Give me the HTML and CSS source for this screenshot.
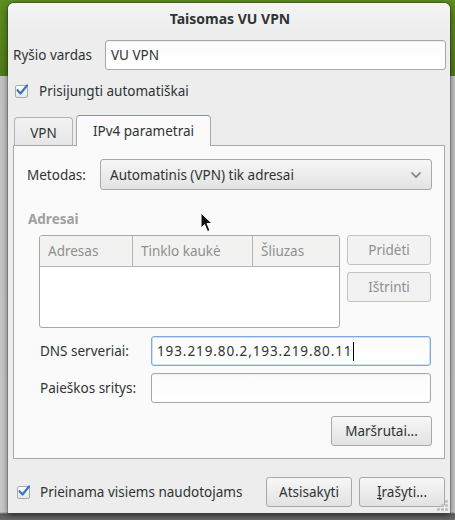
FILE: index.html
```html
<!DOCTYPE html>
<html lang="lt">
<head>
<meta charset="utf-8">
<link rel="stylesheet" href="styles.css">
</head>
<body>
<div class="desktop">
  <div class="window">
    <div class="titlebar">Taisomas VU VPN</div>
    <div class="content">
      <div class="row name-row">
        <span class="label name-label">Ryšio vardas</span>
        <div class="entry name-entry">VU VPN</div>
      </div>
      <div class="check-row auto-row">
        <span class="checkbox"><svg viewBox="0 0 14 14" width="14" height="14"><path d="M2.5 7.2 L5.5 10.5 L12 2.5" fill="none" stroke="#3a74c4" stroke-width="2.2" stroke-linecap="round" stroke-linejoin="round"/></svg></span>
        <span class="check-text">Prisijungti automatiškai</span>
      </div>
      <div class="tabs">
        <div class="tab">VPN</div>
        <div class="tab active">IPv4 parametrai</div>
      </div>
      <div class="notebook">
        <div class="row method-row">
          <span class="label method-label">Metodas:</span>
          <div class="combo">
            <span>Automatinis (VPN) tik adresai</span>
            <svg class="chev" viewBox="0 0 12 8" width="12" height="8"><path d="M1.5 1.5 L6 6 L10.5 1.5" fill="none" stroke="#7b7b7b" stroke-width="1.6"/></svg>
          </div>
        </div>
        <div class="section-title">Adresai</div>
        <div class="addr-row">
          <div class="table">
            <div class="thead">
              <div class="th c1">Adresas</div>
              <div class="th c2">Tinklo kaukė</div>
              <div class="th c3">Šliuzas</div>
            </div>
            <div class="tbody"></div>
          </div>
          <div class="side-buttons">
            <div class="btn disabled side">Pridėti</div>
            <div class="btn disabled side">Ištrinti</div>
          </div>
        </div>
        <div class="row field-row dns-row">
          <span class="label field-label">DNS serveriai:</span>
          <div class="entry field-entry focus"><span class="dns-text">193.219.80.2,193.219.80.11</span><span class="caret"></span></div>
        </div>
        <div class="row field-row search-row">
          <span class="label field-label">Paieškos sritys:</span>
          <div class="entry field-entry"></div>
        </div>
        <div class="routes-row">
          <div class="btn routes">Maršrutai...</div>
        </div>
      </div>
      <div class="bottom-row">
        <div class="check-row">
          <span class="checkbox"><svg viewBox="0 0 14 14" width="14" height="14"><path d="M2.5 7.2 L5.5 10.5 L12 2.5" fill="none" stroke="#3a74c4" stroke-width="2.2" stroke-linecap="round" stroke-linejoin="round"/></svg></span>
          <span class="check-text">Prieinama visiems naudotojams</span>
        </div>
        <div class="dialog-buttons">
          <div class="btn action">Atsisakyti</div>
          <div class="btn action"><u>Į</u>rašyti...</div>
        </div>
      </div>
    </div>
    <div class="grip">
      <i></i><i></i><i></i><i></i><i></i><i></i>
    </div>
  </div>
  <svg class="cursor" viewBox="0 0 14 22" width="14" height="22"><path d="M1 1 L1 16 L4.5 12.5 L7.5 19.5 L10 18.5 L7 11.5 L12 11.5 Z" fill="#111" stroke="#fff" stroke-width="1"/></svg>
</div>
</body>
</html>
```

FILE: styles.css
```css
* { box-sizing: border-box; }
html, body { margin: 0; padding: 0; }
body {
  width: 455px;
  height: 520px;
  overflow: hidden;
  font-family: "Noto Sans", "Open Sans", sans-serif;
  font-size: 13.5px;
  color: #2e3436;
}
.desktop {
  position: relative;
  width: 455px;
  height: 520px;
  padding: 3px 0 0 8px;
  background:
    linear-gradient(to bottom, #5e8d21 0, #4f7c17 76px, #c4c4c4 76px, #c9c9c9 512px, #5a5a5a 514px, #6c6c6c 520px);
}
.window {
  position: relative;
  width: 442px;
  height: 510px;
  background: #ededed;
  border-radius: 6px 6px 0 0;
  box-shadow: 0 2px 7px rgba(0,0,0,0.55), 0 0 0 1px rgba(0,0,0,0.18);
}
.titlebar {
  height: 32px;
  line-height: 32px;
  text-align: center;
  font-weight: bold;
  font-size: 14px;
  border-radius: 6px 6px 0 0;
  background: linear-gradient(to bottom, #f4f4f4, #ededed);
  padding-left: 2px;
}
.content {
  padding: 5px 4px 0 5px;
}
.row {
  display: flex;
  align-items: center;
}
.name-row { height: 30px; }
.name-label { width: 92px; }
.entry {
  height: 30px;
  border: 1px solid #a8a8a8;
  border-radius: 3px;
  background: linear-gradient(to bottom, #fbfbfb, #ffffff);
  box-shadow: inset 0 1px 1px rgba(0,0,0,0.06);
  display: flex;
  align-items: center;
  padding-left: 5px;
}
.name-entry { flex: 1; }
.focus {
  border-color: #7fa8de;
  box-shadow: inset 0 0 0 1px rgba(127,168,222,0.35);
}
.dns-text { letter-spacing: 0.9px; }
.caret {
  display: inline-block;
  width: 1px;
  height: 19px;
  background: #000;
  margin-left: 1px;
}
.check-row {
  display: flex;
  align-items: center;
  height: 16px;
}
.auto-row { margin-top: 13px; }
.checkbox {
  width: 13px;
  height: 13px;
  margin-left: 2px;
  border: 1px solid #a9a9a9;
  border-radius: 2px;
  background: linear-gradient(to bottom, #ffffff, #e8e8e8);
  position: relative;
}
.checkbox svg {
  position: absolute;
  left: -1px;
  top: -3px;
}
.check-text { margin-left: 11px; }
.tabs {
  display: flex;
  align-items: flex-end;
  height: 30px;
  margin-top: 16px;
}
.tab {
  height: 28px;
  width: 59px;
  margin-left: 1px;
  border: 1px solid #b4b4b4;
  border-bottom: none;
  border-radius: 4px 4px 0 0;
  background: linear-gradient(to bottom, #f3f3f3, #e6e6e6);
  display: flex;
  align-items: center;
  justify-content: center;
  padding-top: 2px;
}
.tab.active {
  height: 31px;
  width: 135px;
  margin-left: 3px;
  margin-bottom: -1px;
  background: #fafafa;
  border-color: #a8a8a8;
  border-top: 1px solid #5a9bdd;
  position: relative;
  z-index: 1;
  padding-top: 0;
}
.notebook {
  height: 314px;
  border: 1px solid #a8a8a8;
  background: #fafafa;
  margin-right: 1px;
  padding: 13px 12px 0 13px;
}
.method-row { height: 31px; }
.method-label { width: 73px; }
.combo {
  flex: 1;
  height: 31px;
  border: 1px solid #a8a8a8;
  border-radius: 3px;
  background: linear-gradient(to bottom, #f6f6f6, #e3e3e3);
  display: flex;
  align-items: center;
  justify-content: space-between;
  padding: 0 9px 0 9px;
}
.chev { margin-top: 1px; }
.section-title {
  margin-top: 21px;
  height: 16px;
  line-height: 16px;
  font-weight: bold;
  color: #a0a0a0;
  padding-left: 1px;
}
.addr-row {
  display: flex;
  margin-top: 8px;
  margin-left: 12px;
  height: 93px;
}
.table {
  width: 301px;
  height: 93px;
  border: 1px solid #a8a8a8;
  border-radius: 3px;
  background: #ffffff;
  overflow: hidden;
}
.thead {
  display: flex;
  height: 31px;
  background: #f2f2f1;
  border-bottom: 1px solid #b4b4b4;
}
.th {
  color: #8f8f8f;
  display: flex;
  align-items: center;
  padding-left: 8px;
  border-right: 1px solid #b4b4b4;
}
.th.c1 { width: 93px; }
.th.c2 { width: 120px; }
.th.c3 { flex: 1; border-right: none; }
.side-buttons {
  margin-left: 7px;
  display: flex;
  flex-direction: column;
  gap: 7px;
}
.btn {
  height: 30px;
  border: 1px solid #a8a8a8;
  border-radius: 3px;
  background: linear-gradient(to bottom, #f7f7f7, #e2e2e2);
  display: flex;
  align-items: center;
  justify-content: center;
}
.btn u { text-decoration: none; border-bottom: 1px solid #2e3436; line-height: 1; }
.btn.disabled {
  color: #8f8f8f;
  border-color: #c2c2c2;
  background: #f2f2f2;
}
.side { width: 84px; }
.field-row { margin-left: 13px; }
.dns-row { margin-top: 8px; }
.search-row { margin-top: 7px; }
.field-label { width: 111px; }
.field-entry { width: 280px; padding-left: 5px; }
.routes-row {
  display: flex;
  justify-content: flex-end;
  margin-top: 13px;
}
.routes { width: 101px; }
.bottom-row {
  display: flex;
  align-items: center;
  justify-content: space-between;
  margin-top: 18px;
  height: 30px;
}
.bottom-row .checkbox { margin-left: 4px; }
.bottom-row .check-text { margin-left: 10px; }
.dialog-buttons {
  display: flex;
  gap: 7px;
  margin-right: 1px;
}
.action { width: 86px; }
.grip {
  position: absolute;
  right: 2px;
  bottom: 2px;
  width: 12px;
  height: 12px;
}
.grip i {
  position: absolute;
  width: 3px;
  height: 3px;
  background: #c2c2c2;
  border-radius: 1px;
}
.grip i:nth-child(1) { right: 0; bottom: 0; }
.grip i:nth-child(2) { right: 4px; bottom: 0; }
.grip i:nth-child(3) { right: 8px; bottom: 0; }
.grip i:nth-child(4) { right: 0; bottom: 4px; }
.grip i:nth-child(5) { right: 4px; bottom: 4px; }
.grip i:nth-child(6) { right: 0; bottom: 8px; }
.cursor {
  position: absolute;
  left: 200px;
  top: 212px;
}
```
